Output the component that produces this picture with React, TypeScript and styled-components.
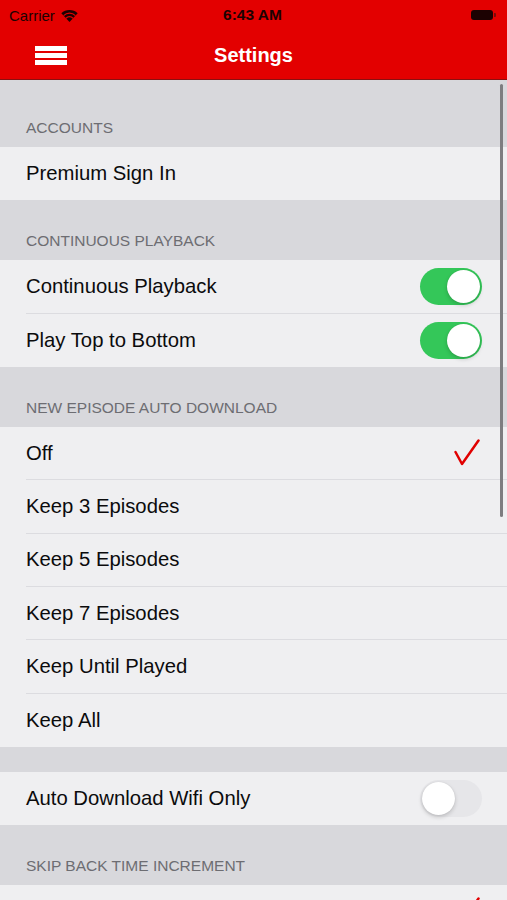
import React from 'react';
import styled, { createGlobalStyle } from 'styled-components';

const GlobalStyle = createGlobalStyle`
  html, body {
    margin: 0;
    padding: 0;
    height: 900px;
    overflow: hidden;
    background: #d8d8dc;
  }
  body {
    font-family: 'Liberation Sans', Arial, sans-serif;
    -webkit-font-smoothing: antialiased;
  }
`;

const Screen = styled.div`
  position: relative;
  width: 507px;
  height: 900px;
  display: flex;
  flex-direction: column;
  overflow: hidden;
  background: #d8d8dc;
`;

const TopBar = styled.header`
  background: #e30000;
  border-bottom: 1px solid #8a1010;
  display: flex;
  flex-direction: column;
`;

const StatusBar = styled.div`
  height: 30px;
  display: grid;
  grid-template-columns: 1fr auto 1fr;
  align-items: center;
  padding: 0 11px 0 9px;
  color: #1c0202;
  font-size: 15px;
`;

const Carrier = styled.div`
  display: flex;
  align-items: center;
  gap: 6px;
`;

const Clock = styled.div`
  font-weight: bold;
  font-size: 15.5px;
`;

const Battery = styled.div`
  justify-self: end;
  display: flex;
  align-items: center;
  gap: 1px;
`;

const BatteryBody = styled.div`
  width: 22px;
  height: 10px;
  border-radius: 3px;
  background: #1c0202;
`;

const BatteryTip = styled.div`
  width: 2px;
  height: 4px;
  border-radius: 0 1px 1px 0;
  background: #7a0a0a;
`;

const NavBar = styled.div`
  height: 49px;
  display: grid;
  grid-template-columns: 80px 1fr 80px;
  align-items: center;
`;

const MenuButton = styled.div`
  padding-left: 35px;
  display: flex;
  flex-direction: column;
  gap: 2px;
  margin-top: 2px;
`;

const MenuBar = styled.span`
  display: block;
  width: 32px;
  height: 5px;
  background: #ffffff;
`;

const NavTitle = styled.h1`
  margin: 0;
  text-align: center;
  color: #ffffff;
  font-size: 20px;
  font-weight: bold;
  margin-top: 2px;
`;

const Content = styled.main`
  flex: 1;
  display: flex;
  flex-direction: column;
`;

const SectionHeader = styled.div<{ $height: number }>`
  height: ${(p) => p.$height}px;
  box-sizing: border-box;
  display: flex;
  align-items: flex-end;
  padding: 0 0 10px 26px;
  color: #6d6d72;
  font-size: 15.5px;
  line-height: 18px;
  text-transform: uppercase;
  flex-shrink: 0;
`;

const Group = styled.div`
  background: #efeff1;
  flex-shrink: 0;
`;

const Cell = styled.div`
  height: 53.33px;
  padding-left: 26px;
  box-sizing: border-box;
  display: flex;
`;

const CellInner = styled.div<{ $last: boolean }>`
  flex: 1;
  display: flex;
  align-items: center;
  justify-content: space-between;
  padding-right: 25px;
  border-bottom: ${(p) => (p.$last ? 'none' : '1px solid #dcdce0')};
  color: #0b0b0c;
  font-size: 20.3px;
`;

const CheckMark = styled.svg`
  margin-right: 2px;
  margin-top: -2px;
`;

const Toggle = styled.div<{ $on: boolean }>`
  width: 62px;
  height: 37px;
  border-radius: 19px;
  box-sizing: border-box;
  padding: 2px;
  display: flex;
  justify-content: ${(p) => (p.$on ? 'flex-end' : 'flex-start')};
  background: ${(p) => (p.$on ? '#34c759' : '#e6e6e9')};
`;

const Knob = styled.div`
  width: 33px;
  height: 33px;
  border-radius: 50%;
  background: #ffffff;
  box-shadow: 0 2px 4px rgba(0, 0, 0, 0.18), 0 0 1px rgba(0, 0, 0, 0.12);
`;

const Spacer = styled.div`
  height: 25px;
  flex-shrink: 0;
`;

const ScrollIndicator = styled.div`
  position: absolute;
  right: 4px;
  top: 84px;
  width: 3px;
  height: 433px;
  border-radius: 2px;
  background: #7d7d80;
`;

const WifiIcon = () => (
  <svg width="17" height="13" viewBox="0 0 17 13">
    <path d="M8.5 13 L0.3 4.2 A11.8 11.8 0 0 1 16.7 4.2 Z" fill="#1c0202" />
    <path d="M2.6 6.6 A8.5 8.5 0 0 1 14.4 6.6" stroke="#e30000" strokeWidth="1.3" fill="none" />
    <path d="M5 9.2 A5 5 0 0 1 12 9.2" stroke="#e30000" strokeWidth="1.3" fill="none" />
  </svg>
);

const Check = () => (
  <CheckMark width="26" height="27" viewBox="0 0 26 27">
    <path
      d="M1.5 13 L8 25 L24.5 1.5"
      stroke="#e10000"
      strokeWidth="2.5"
      fill="none"
      strokeLinecap="round"
      strokeLinejoin="round"
    />
  </CheckMark>
);

type Row = { id: string; label?: string; toggle?: boolean; checked?: boolean };

const SettingsGroup = ({ rows }: { rows: Row[] }) => (
  <Group>
    {rows.map((row, i) => (
      <Cell key={row.id}>
        <CellInner $last={i === rows.length - 1}>
          <span>{row.label}</span>
          {row.toggle !== undefined && (
            <Toggle $on={row.toggle}>
              <Knob />
            </Toggle>
          )}
          {row.checked && <Check />}
        </CellInner>
      </Cell>
    ))}
  </Group>
);

const App = () => {
  return (
    <>
      <GlobalStyle />
      <Screen>
        <TopBar>
          <StatusBar>
            <Carrier>
              <span>Carrier</span>
              <WifiIcon />
            </Carrier>
            <Clock>6:43 AM</Clock>
            <Battery>
              <BatteryBody />
              <BatteryTip />
            </Battery>
          </StatusBar>
          <NavBar>
            <MenuButton>
              <MenuBar />
              <MenuBar />
              <MenuBar />
            </MenuButton>
            <NavTitle>Settings</NavTitle>
            <div />
          </NavBar>
        </TopBar>
        <Content>
          <SectionHeader $height={67}>Accounts</SectionHeader>
          <SettingsGroup rows={[{ id: 'premium', label: 'Premium Sign In' }]} />
          <SectionHeader $height={60}>Continuous Playback</SectionHeader>
          <SettingsGroup
            rows={[
              { id: 'cont', label: 'Continuous Playback', toggle: true },
              { id: 'top', label: 'Play Top to Bottom', toggle: true },
            ]}
          />
          <SectionHeader $height={60}>New Episode Auto Download</SectionHeader>
          <SettingsGroup
            rows={[
              { id: 'off', label: 'Off', checked: true },
              { id: 'k3', label: 'Keep 3 Episodes' },
              { id: 'k5', label: 'Keep 5 Episodes' },
              { id: 'k7', label: 'Keep 7 Episodes' },
              { id: 'until', label: 'Keep Until Played' },
              { id: 'all', label: 'Keep All' },
            ]}
          />
          <Spacer />
          <SettingsGroup rows={[{ id: 'wifi', label: 'Auto Download Wifi Only', toggle: false }]} />
          <SectionHeader $height={60}>Skip Back Time Increment</SectionHeader>
          <SettingsGroup rows={[{ id: 'skip1', checked: true }]} />
        </Content>
        <ScrollIndicator />
      </Screen>
    </>
  );
};

export default App;
